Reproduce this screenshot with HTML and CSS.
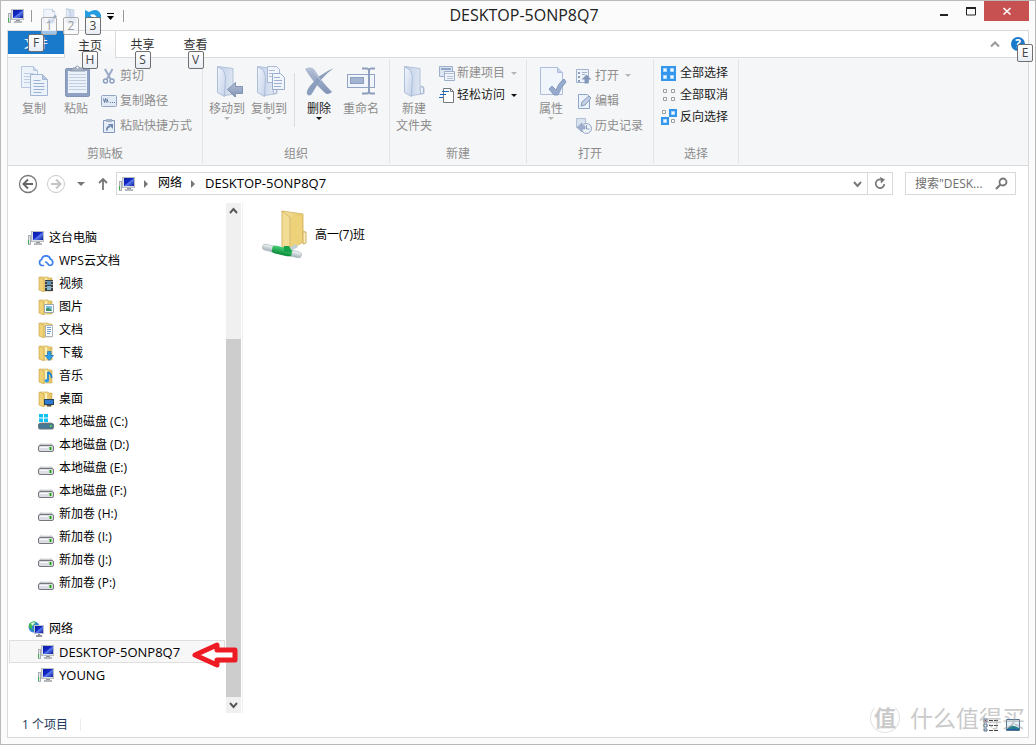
FILE: index.html
```html
<!DOCTYPE html>
<html lang="zh-CN">
<head>
<meta charset="utf-8">
<title>DESKTOP-5ONP8Q7</title>
<link rel="stylesheet" href="styles.css">
</head>
<body>
<svg class="defs" aria-hidden="true">
  <defs>
    <linearGradient id="gScreen" x1="0" y1="0" x2="1" y2="1"><stop offset="0" stop-color="#0a1fa8"/><stop offset=".45" stop-color="#1326c4"/><stop offset=".55" stop-color="#5c7cf0"/><stop offset="1" stop-color="#0b1a9a"/></linearGradient>
    <linearGradient id="gPale" x1="0" y1="0" x2="1" y2="1"><stop offset="0" stop-color="#f1f6fd"/><stop offset="1" stop-color="#c3d1e8"/></linearGradient>
    <linearGradient id="gFront" x1="0" y1="0" x2="1" y2="0"><stop offset="0" stop-color="#c0cfe6"/><stop offset="1" stop-color="#e3ebf6"/></linearGradient>
    <linearGradient id="gSteel" x1="0" y1="0" x2="0" y2="1"><stop offset="0" stop-color="#b3bfd5"/><stop offset="1" stop-color="#8093b6"/></linearGradient>
    <linearGradient id="gYellow" x1="0" y1="0" x2="1" y2="0"><stop offset="0" stop-color="#f7e7a8"/><stop offset="1" stop-color="#e2be5a"/></linearGradient>
    <linearGradient id="gPipe" x1="0" y1="0" x2="0" y2="1"><stop offset="0" stop-color="#f4f7f8"/><stop offset="1" stop-color="#a3b2b8"/></linearGradient>
    <linearGradient id="gGreen" x1="0" y1="0" x2="0" y2="1"><stop offset="0" stop-color="#4fd07a"/><stop offset="1" stop-color="#078a35"/></linearGradient>
  </defs>
  <symbol id="pc" viewBox="0 0 16 16">
    <path d="M0 5h3v10H0z" fill="#a9aeb2"/><path d="M1 6h1v8H1z" fill="#e4e7e9"/><path d="M0 10h1v4H0z" fill="#3fae4a"/>
    <rect x="3" y="1" width="13" height="11" fill="#b9bdc1"/><rect x="4" y="2" width="11" height="9" fill="#dfe2e5"/><rect x="5" y="2" width="10" height="8" fill="url(#gScreen)"/>
    <path d="M8 12h4v2H8z" fill="#8f959a"/><path d="M6 13h8v2H6z" fill="#b4b9bd"/>
  </symbol>
  <symbol id="net" viewBox="0 0 16 16">
    <circle cx="6" cy="6" r="5.500" fill="#2f86d2"/><path d="M1 3q4-4 7-2L6 4 4 5v3L1 7zM5 8l3 1-2 2z" fill="#3fb649"/><path d="M3 2l3-1 1 1-3 3z" fill="#d9f1e8"/>
    <rect x="6" y="4" width="10" height="9" fill="#bfc4cc"/><rect x="7" y="5" width="8" height="7" fill="url(#gScreen)"/><path d="M10 13h2v1h2v2H8v-2h2z" fill="#8f959a"/>
  </symbol>
  <symbol id="cloud" viewBox="0 0 16 16">
    <path d="M5.500 12.500H4.200A3.100 3.100 0 0 1 3.600 6.500 4.600 4.600 0 0 1 12.500 6.300 3.200 3.200 0 0 1 12.200 12.500C9.500 12.500 9.700 9 7.700 9" fill="none" stroke="#3c80ee" stroke-width="1.700" stroke-linecap="round"/>
  </symbol>
  <symbol id="fold" viewBox="0 0 16 16">
    <path d="M2 1h8l1 1h3v13H6z" fill="url(#gYellow)" stroke="#cfad55" stroke-width=".6"/><path d="M1 1l5 2v13l-5-2z" fill="#f0d274" stroke="#c39f45" stroke-width=".6"/><path d="M7 3l2-1v12l-2 1z" fill="#fff2bd"/>
  </symbol>
  <symbol id="f-video" viewBox="0 0 16 16"><use href="#fold"/><path d="M7 4h8v11H7z" fill="#3b4045"/><path d="M9 5h4v4H9z" fill="#5f91b8"/><path d="M9 10h4v4H9z" fill="#86b6cf"/><path d="M7.500 5h1v1h-1zm0 3h1v1h-1zm0 3h1v1h-1zm6-6h1v1h-1zm0 3h1v1h-1zm0 3h1v1h-1z" fill="#fff"/></symbol>
  <symbol id="f-pic" viewBox="0 0 16 16"><use href="#fold"/><path d="M6.500 5.500h9v8h-9z" fill="#fff" stroke="#9aa7b2"/><path d="M8 7h6v3H8z" fill="#80bde8"/><path d="M8 10l2-1.500L14 11v1H8z" fill="#38966a"/></symbol>
  <symbol id="f-doc" viewBox="0 0 16 16"><use href="#fold"/><path d="M7.500 3.500h7v11h-7z" fill="#fff" stroke="#a9b3bd"/><path d="M9 5.500h4M9 7.500h4M9 9.500h4M9 11.500h3" stroke="#6f9bd0"/></symbol>
  <symbol id="f-down" viewBox="0 0 16 16"><use href="#fold"/><path d="M9.500 6.500h3.500v4h2.500L11.200 15.500 7 10.500h2.500z" fill="#2da0ea" stroke="#1573b8" stroke-width=".7"/></symbol>
  <symbol id="f-music" viewBox="0 0 16 16"><use href="#fold"/><path d="M10 4v8.500M10 4q4 2 3.500 6" fill="none" stroke="#1583d8" stroke-width="1.700"/><ellipse cx="8.700" cy="12.700" rx="2.200" ry="1.700" fill="#2c9df0"/></symbol>
  <symbol id="f-desk" viewBox="0 0 16 16"><use href="#fold"/><path d="M6 8h10v6H6z" fill="#27445e"/><path d="M7 9h8v4H7z" fill="#2e7bd0"/><path d="M9 14h4v1.500H9z" fill="#555"/></symbol>
  <symbol id="drive" viewBox="0 0 16 16">
    <path d="M3 6h10l2 2H1z" fill="#c9cccf"/><path d="M4 6h8l1 1H3z" fill="#eceeef"/><rect x=".5" y="8.500" width="15" height="6" rx="1.500" fill="#dcdde4" stroke="#74787d"/><path d="M2 10h8v1H2z" fill="#f8f8fb"/><path d="M11 10h3v3h-3z" fill="#8ad37e"/><path d="M12 10h1v3h-1z" fill="#179b10"/>
  </symbol>
  <symbol id="sysdrive" viewBox="0 0 16 16">
    <path d="M1 0h4v3.500H1zM6 0h4v3.500H6zM1 4.500h4V8H1zM6 4.500h4V8H6z" fill="#0fc1f2"/><path d="M3 8h10l2.500 2.500H.5z" fill="#c6cbd0"/><rect x=".5" y="9.500" width="15" height="5.500" rx="1.500" fill="#477992" stroke="#68747c"/><path d="M12 11h1.500v2H12z" fill="#60e34b"/>
  </symbol>
  <symbol id="copy" viewBox="0 0 32 32">
    <path d="M3.500 1.500h12l4 4v17h-16z" fill="#edf3fb" stroke="#b6c6df"/><path d="M15.500 1.500v4h4" fill="#cfdaeb" stroke="#b6c6df"/><path d="M6 8.500h10M6 11.500h7M6 14.500h7M6 17.500h7" stroke="#c0cee4"/>
    <path d="M12.500 9.500h12l5 5v16h-17z" fill="#edf3fb" stroke="#a2b5d4"/><path d="M24.500 9.500v5h5" fill="#b9c9e1" stroke="#a2b5d4"/><path d="M15.500 15.500h7M15.500 18.500h11M15.500 21.500h11M15.500 24.500h11M15.500 27.500h8" stroke="#9bb0d4"/>
  </symbol>
  <symbol id="paste" viewBox="0 0 32 32">
    <rect x="5.500" y="3.500" width="24" height="28" rx="1.500" fill="#8fa2c3" stroke="#8295b8"/><path d="M8 6h19v22H8z" fill="#ecf2fa"/><path d="M9 9.500h17M9 12.500h17M9 15.500h17M9 18.500h17M9 21.500h17M9 24.500h17" stroke="#c1cee1"/><path d="M10 6l3-3h2q2-4 5 0h2l3 3z" fill="#a7b2c5" stroke="#8b98ae"/><circle cx="17.500" cy="2.500" r="1" fill="#fff"/>
  </symbol>
  <symbol id="cut" viewBox="0 0 16 16"><path d="M4 1l5.500 10M11.500 1L6 11" stroke="#9babc8" stroke-width="2"/><circle cx="4.500" cy="13" r="2" fill="none" stroke="#8b9fc1" stroke-width="1.500"/><circle cx="11" cy="13" r="2" fill="none" stroke="#8b9fc1" stroke-width="1.500"/></symbol>
  <symbol id="path" viewBox="0 0 16 16"><rect x=".5" y="2.500" width="15" height="11" rx="1" fill="#e2eaf5" stroke="#93a4c3"/><path d="M2.500 5.500l1 4 1-4 1 4M6 5.500l1 4M9 9.500h1M11 9.500h1M13 9.500h1" fill="none" stroke="#6379a3"/></symbol>
  <symbol id="shortcut" viewBox="0 0 16 16"><path d="M2.500 2.500h11v12h-11z" fill="#e6edf7" stroke="#8297bb"/><path d="M5 1h6v3H5z" fill="#a3b1c9"/><path d="M6 12.500q-.5-4 3-4" fill="none" stroke="#7087b1" stroke-width="1.800"/><path d="M7 6h5v5z" fill="#7087b1"/></symbol>
  <symbol id="bigfold" viewBox="0 0 32 32"><path d="M7 1.500l15 2v17l4 2v6l-12 2z" fill="url(#gFront)" stroke="#b3c2da"/><path d="M22 22h3.500v6l-3 1z" fill="#e9f0f9" stroke="#a9bad5"/><path d="M6.500 1.500l6 4 2 6-1 20-7-4z" fill="url(#gPale)" stroke="#aebfd9"/></symbol>
  <symbol id="moveto" viewBox="0 0 32 32"><use href="#bigfold"/><path d="M16.500 24.500l8-7v4h7v7h-7v4z" fill="url(#gSteel)" stroke="#8394b3"/></symbol>
  <symbol id="copyto" viewBox="0 0 32 32"><use href="#bigfold" x="-2"/><path d="M14.500 1.500h9l3 3v13h-12z" fill="#f1f5fb" stroke="#a6b8d5"/><path d="M16 5.500h6M16 8.500h3M16 11.500h3" stroke="#aabcd8"/><path d="M19.500 8.500h8l4 4v12h-12z" fill="#f1f5fb" stroke="#98acce"/><path d="M21 12.500h6M21 15.500h8M21 18.500h8M21 21.500h7" stroke="#9bb0d2"/></symbol>
  <symbol id="delete" viewBox="0 0 32 32"><path d="M2 4q7-4 11 3 6 10 16 20-5 4-8 0Q9 16 2 4z" fill="url(#gSteel)"/><path d="M31 3Q18 12 10 27q-3 6-6 2-1-3 3-8Q16 9 31 3z" fill="#8c9ebd"/><path d="M4 5q5-2 8 3l6 8" fill="none" stroke="#bdc8db"/></symbol>
  <symbol id="rename" viewBox="0 0 32 32"><rect x="2.500" y="9.500" width="27" height="13" fill="#f0f5fb" stroke="#91a4c5"/><rect x="5.500" y="12.500" width="13" height="6" fill="#a3b3cf" stroke="#8b9ebf"/><path d="M17 3.500h5q1.500 0 2 2 .5-2 2-2h4M24 5v22M17 28.500h5q1.500 0 2-2 .5 2 2 2h4" fill="none" stroke="#8c9ebc" stroke-width="2"/></symbol>
  <symbol id="props" viewBox="0 0 32 32"><path d="M5.500 2.500h17l5 5v22h-22z" fill="#f0f5fc" stroke="#acbedb"/><path d="M22.500 2.500v5h5" fill="#c4d1e6" stroke="#acbedb"/><path d="M14 24l3-3 4 4q3-8 8-11l2 3q-5 5-8 13h-4z" fill="#96aacd" stroke="#869bc0"/></symbol>
  <symbol id="newitem" viewBox="0 0 16 16"><path d="M.5 1.500h13v10H.5z" fill="#dce5f2" stroke="#9eafcc"/><path d="M2 4h10" stroke="#94a6c5" stroke-width="2"/><path d="M5.500 6.500h10v9h-10z" fill="#f0f5fb" stroke="#9eafcc"/><path d="M6 8.500h9M8 11.500h6M8 13.500h6" stroke="#b2c0d8"/></symbol>
  <symbol id="easy" viewBox="0 0 16 16"><path d="M4.500 1.500h7l3 3v11h-10z" fill="#fff" stroke="#777b80"/><path d="M11.500 1.500v3h3" fill="none" stroke="#777b80"/><path d="M3 4.500h7M1 7.500h6M0 10.500h4" stroke="#1669b8"/></symbol>
  <symbol id="open" viewBox="0 0 16 16"><path d="M.5 1.500h12v13H.5z" fill="#eef3fa" stroke="#a2b3cf"/><path d="M2 4h2v2H2zM2 8h2v2H2zM2 12h2v2H2z" fill="#8a9dbf"/><path d="M6 4.500h5M6 6.500h3" stroke="#a2b3cf"/><path d="M10.500 6.500l5 5h-3v4h-4v-4h-3z" fill="#8397bb"/></symbol>
  <symbol id="edit" viewBox="0 0 16 16"><path d="M2.500 1.500h9l2 2v12h-11z" fill="#edf3fb" stroke="#8ea6cd"/><path d="M5 13l1-4 7-6 2 2-6 7z" fill="#c4d1e6" stroke="#8498bb"/></symbol>
  <symbol id="history" viewBox="0 0 16 16"><path d="M.5.500h9v9h-9z" fill="#d9e2ef" stroke="#b1bed3"/><circle cx="10.500" cy="10.500" r="5" fill="#edf2f8" stroke="#91a4c5"/><path d="M10.500 7v4h3" fill="none" stroke="#8c9fbe"/><path d="M1 9.500L6 5v3h3v3H6v3z" fill="#a0b0cc" stroke="#8c9fbe" stroke-width=".7"/></symbol>
  <symbol id="selall" viewBox="0 0 16 16"><path d="M0 1h15v15H0z" fill="#3497ed"/><path d="M2.500 3.500h3v3h-3zM9.500 3.500h3v3h-3zM2.500 10.500h3v3h-3zM9.500 10.500h3v3h-3z" fill="#f4faff" stroke="#b3dafb"/></symbol>
  <symbol id="selnone" viewBox="0 0 16 16"><path d="M2.500 2.500h3v3h-3zM10.500 2.500h3v3h-3zM2.500 10.500h3v3h-3zM10.500 10.500h3v3h-3z" fill="#fff" stroke="#9c9c9c"/></symbol>
  <symbol id="selinv" viewBox="0 0 16 16"><path d="M1.500 1.500h3v3h-3zM10.500 10.500h3v3h-3z" fill="#fff" stroke="#9c9c9c"/><path d="M8 0h8v8H8zM0 8h8v8H0z" fill="#3497ed"/><path d="M10.500 2.500h3v3h-3zM2.500 10.500h3v3h-3z" fill="#f4faff" stroke="#b3dafb"/></symbol>
  <symbol id="undo" viewBox="0 0 16 16"><path d="M0 2v8h8L5 7q4-2 6 1 2 3-1 7 7-3 6-8Q13-1 4 4z" fill="#249cdf"/></symbol>
  <symbol id="netfolder" viewBox="0 0 46 50">
    <path d="M20 1l21 3v17l2 1v9L27 40z" fill="url(#gYellow)" stroke="#d9bd6d"/><path d="M28 8l12-3v27l-11 8z" fill="#eed27a"/><path d="M41 22h3v11l-3 1z" fill="#f9edc0" stroke="#cfb060"/><path d="M20 1l8 6v35l-8-6z" fill="#f3dc95" stroke="#d5b866"/>
    <path d="M25 39l9-5 2 3-9 5z" fill="#c2cfd2"/><g transform="rotate(13 20 41)"><rect x="0" y="38" width="40" height="6" rx="3" fill="url(#gPipe)" stroke="#a6b3b8" stroke-width=".6"/><path d="M10 38l4-1h13l3 1v6l-4 1H13l-3-1z" fill="url(#gGreen)"/></g><path d="M22 36h5l3 6h-8z" fill="#18a14b"/>
  </symbol>
</svg>

<div class="window">
  <header class="titlebar">
    <div class="quick">
      <svg class="i16"><use href="#pc"/></svg><i class="bar"></i>
      <button class="qbtn" aria-label="属性"><svg class="i16"><use href="#props"/></svg><kbd class="tip faded">1</kbd></button>
      <button class="qbtn" aria-label="新建文件夹"><svg class="i16"><use href="#bigfold"/></svg><kbd class="tip faded">2</kbd></button>
      <button class="qbtn" aria-label="撤消"><svg class="i16"><use href="#undo"/></svg><kbd class="tip">3</kbd></button>
      <button class="qmore" aria-label="自定义"><svg width="7" height="8" viewBox="0 0 7 8"><path d="M0 1h7v1H0zM0 4h7L3.500 8z"/></svg></button><i class="bar"></i>
    </div>
    <h1 class="title">DESKTOP-5ONP8Q7</h1>
    <div class="controls">
      <button aria-label="最小化"><svg width="10" height="12" viewBox="0 0 10 12"><path d="M1 9h8v2H1z" fill="#222"/></svg></button>
      <button aria-label="最大化"><svg width="12" height="12" viewBox="0 0 12 12"><path d="M1.500 3h9v7h-9z" fill="none" stroke="#222"/><path d="M1 2h10v2H1z" fill="#222"/></svg></button>
      <button class="close" aria-label="关闭"><svg width="10" height="10" viewBox="0 0 10 10"><path d="M1.500 2l7 6.500M8.500 2l-7 6.500" stroke="#fff" stroke-width="1.600"/></svg></button>
    </div>
  </header>

  <div class="client">
    <nav class="tabs">
      <button class="tab file">文件<kbd class="tip">F</kbd></button>
      <button class="tab active">主页<kbd class="tip">H</kbd></button>
      <button class="tab">共享<kbd class="tip">S</kbd></button>
      <button class="tab">查看<kbd class="tip">V</kbd></button>
      <div class="tabend">
        <button aria-label="折叠功能区"><svg width="10" height="8" viewBox="0 0 10 8"><path d="M1 6.500l4-4 4 4" fill="none" stroke="#999" stroke-width="2"/></svg></button>
        <button class="help" aria-label="帮助"><span>?</span><kbd class="tip">E</kbd></button>
      </div>
    </nav>

    <div class="ribbon">
      <section class="group clipboard">
        <div class="tools">
          <button class="big"><svg class="i32"><use href="#copy"/></svg><span>复制</span></button>
          <button class="big"><svg class="i32"><use href="#paste"/></svg><span>粘贴</span></button>
          <div class="stack">
            <button class="small"><svg class="i16"><use href="#cut"/></svg>剪切</button>
            <button class="small"><svg class="i16"><use href="#path"/></svg>复制路径</button>
            <button class="small"><svg class="i16"><use href="#shortcut"/></svg>粘贴快捷方式</button>
          </div>
        </div>
        <h2>剪贴板</h2>
      </section>
      <section class="group">
        <div class="tools">
          <button class="big"><svg class="i32"><use href="#moveto"/></svg><span>移动到</span><i class="caret"></i></button>
          <button class="big"><svg class="i32"><use href="#copyto"/></svg><span>复制到</span><i class="caret"></i></button>
          <i class="split"></i>
          <button class="big on"><svg class="i32"><use href="#delete"/></svg><span>删除</span><i class="caret"></i></button>
          <button class="big"><svg class="i32"><use href="#rename"/></svg><span>重命名</span></button>
        </div>
        <h2>组织</h2>
      </section>
      <section class="group create">
        <div class="tools">
          <button class="big"><svg class="i32"><use href="#bigfold"/></svg><span>新建<br>文件夹</span></button>
          <div class="stack tight">
            <button class="small"><svg class="i16"><use href="#newitem"/></svg>新建项目<i class="caret"></i></button>
            <button class="small on"><svg class="i16"><use href="#easy"/></svg>轻松访问<i class="caret"></i></button>
          </div>
        </div>
        <h2>新建</h2>
      </section>
      <section class="group opening">
        <div class="tools">
          <button class="big"><svg class="i32"><use href="#props"/></svg><span>属性</span><i class="caret"></i></button>
          <div class="stack">
            <button class="small"><svg class="i16"><use href="#open"/></svg>打开<i class="caret"></i></button>
            <button class="small"><svg class="i16"><use href="#edit"/></svg>编辑</button>
            <button class="small"><svg class="i16"><use href="#history"/></svg>历史记录</button>
          </div>
        </div>
        <h2>打开</h2>
      </section>
      <section class="group select">
        <div class="tools">
          <div class="stack tight">
            <button class="small on"><svg class="i16"><use href="#selall"/></svg>全部选择</button>
            <button class="small on"><svg class="i16"><use href="#selnone"/></svg>全部取消</button>
            <button class="small on"><svg class="i16"><use href="#selinv"/></svg>反向选择</button>
          </div>
        </div>
        <h2>选择</h2>
      </section>
    </div>

    <div class="navrow">
      <button aria-label="后退"><svg width="20" height="20" viewBox="0 0 20 20"><circle cx="10" cy="10" r="8.500" fill="#fff" stroke="#777" stroke-width="1.300"/><path d="M15 10H6M10 5.500L5.500 10l4.500 4.500" fill="none" stroke="#666" stroke-width="2"/></svg></button>
      <button aria-label="前进"><svg width="20" height="20" viewBox="0 0 20 20"><circle cx="10" cy="10" r="8.500" fill="#fff" stroke="#c9c9c9"/><path d="M5 10h9M10 5.500l4.500 4.500-4.500 4.500" fill="none" stroke="#c4c4c4" stroke-width="2"/></svg></button>
      <button class="recent" aria-label="最近位置"><i class="caret"></i></button>
      <button aria-label="上移"><svg width="10" height="14" viewBox="0 0 10 14"><path d="M5 13V2M1 6l4-4 4 4" fill="none" stroke="#777" stroke-width="1.800"/></svg></button>
      <div class="address">
        <svg class="i16"><use href="#pc"/></svg>
        <svg class="chev" viewBox="0 0 4 8"><path d="M0 0l4 4-4 4z"/></svg>
        <a href="#">网络</a>
        <svg class="chev" viewBox="0 0 4 8"><path d="M0 0l4 4-4 4z"/></svg>
        <a class="host" href="#">DESKTOP-5ONP8Q7</a>
        <button class="drop" aria-label="历史地址"><svg width="9" height="8" viewBox="0 0 9 8"><path d="M1 2l3.500 4L8 2" fill="none" stroke="#777" stroke-width="1.900"/></svg></button>
        <button class="refresh" aria-label="刷新"><svg width="12" height="13" viewBox="0 0 12 13"><path d="M6.500 2.500A4.300 4.300 0 1 0 10.300 7" fill="none" stroke="#777" stroke-width="1.700"/><path d="M6 0l5 2.500-4 4z" fill="#777"/></svg></button>
      </div>
      <label class="search"><input type="text" aria-label="搜索" placeholder='搜索"DESK...'><svg width="13" height="13" viewBox="0 0 13 13"><circle cx="8" cy="5" r="3.500" fill="none" stroke="#777" stroke-width="1.800"/><path d="M5.500 7.500L1 12" stroke="#777" stroke-width="2.200"/></svg></label>
    </div>

    <div class="main">
      <nav class="tree">
        <a class="node" href="#"><svg class="i16"><use href="#pc"/></svg>这台电脑</a>
        <a class="node sub" href="#"><svg class="i16"><use href="#cloud"/></svg>WPS云文档</a>
        <a class="node sub" href="#"><svg class="i16"><use href="#f-video"/></svg>视频</a>
        <a class="node sub" href="#"><svg class="i16"><use href="#f-pic"/></svg>图片</a>
        <a class="node sub" href="#"><svg class="i16"><use href="#f-doc"/></svg>文档</a>
        <a class="node sub" href="#"><svg class="i16"><use href="#f-down"/></svg>下载</a>
        <a class="node sub" href="#"><svg class="i16"><use href="#f-music"/></svg>音乐</a>
        <a class="node sub" href="#"><svg class="i16"><use href="#f-desk"/></svg>桌面</a>
        <a class="node sub" href="#"><svg class="i16"><use href="#sysdrive"/></svg>本地磁盘 (C:)</a>
        <a class="node sub" href="#"><svg class="i16"><use href="#drive"/></svg>本地磁盘 (D:)</a>
        <a class="node sub" href="#"><svg class="i16"><use href="#drive"/></svg>本地磁盘 (E:)</a>
        <a class="node sub" href="#"><svg class="i16"><use href="#drive"/></svg>本地磁盘 (F:)</a>
        <a class="node sub" href="#"><svg class="i16"><use href="#drive"/></svg>新加卷 (H:)</a>
        <a class="node sub" href="#"><svg class="i16"><use href="#drive"/></svg>新加卷 (I:)</a>
        <a class="node sub" href="#"><svg class="i16"><use href="#drive"/></svg>新加卷 (J:)</a>
        <a class="node sub" href="#"><svg class="i16"><use href="#drive"/></svg>新加卷 (P:)</a>
        <a class="node section" href="#"><svg class="i16"><use href="#net"/></svg>网络</a>
        <a class="node sub host selected" href="#"><svg class="i16"><use href="#pc"/></svg>DESKTOP-5ONP8Q7
          <svg class="pointer" width="50" height="30" viewBox="0 0 50 30"><path d="M5 15L27 5v5h18v10H27v5z" fill="#fff" stroke="#ed1c24" stroke-width="5" stroke-linejoin="round"/></svg></a>
        <a class="node sub host" href="#"><svg class="i16"><use href="#pc"/></svg>YOUNG</a>
      </nav>
      <div class="scroll">
        <button aria-label="向上滚动"><svg width="9" height="8" viewBox="0 0 9 8"><path d="M1 6l3.500-4L8 6" fill="none" stroke="#555" stroke-width="1.900"/></svg></button>
        <div class="track"><div class="thumb"></div></div>
        <button aria-label="向下滚动"><svg width="9" height="8" viewBox="0 0 9 8"><path d="M1 2l3.500 4L8 2" fill="none" stroke="#555" stroke-width="1.900"/></svg></button>
      </div>
      <main class="files">
        <a class="item" href="#"><svg width="46" height="50"><use href="#netfolder"/></svg>高一(7)班</a>
      </main>
    </div>

    <footer class="status">
      <span class="count">1 个项目</span>
      <div class="views">
        <button aria-label="详细信息"><svg width="16" height="14" viewBox="0 0 16 14"><path d="M1 1h3v3H1zM1 6h3v3H1zM1 11h3v2H1z" fill="#fff" stroke="#4a6a8a"/><path d="M6 2.500h4M11 2.500h4M6 7.500h4M11 7.500h4M6 12.500h4M11 12.500h4" stroke="#444"/><path d="M2 2h1v1H2z" fill="#d33"/></svg></button>
        <button aria-label="大图标"><svg width="16" height="14" viewBox="0 0 16 14"><path d="M1.500 1.500h13v11h-13z" fill="#e6f2fb" stroke="#54738f"/><path d="M2 11q4-6 12-1v2H2z" fill="#237d8c"/><path d="M2 11h12v1H2z" fill="#1d5fa6"/></svg></button>
      </div>
      <div class="watermark"><span class="seal">值</span><span>什么值得买</span></div>
    </footer>
  </div>
</div>
</body>
</html>
```
FILE: styles.css
```css
* { box-sizing: border-box; }
body { margin: 0; color: #000; font: 12px/16px "Open Sans", "Noto Sans CJK SC", sans-serif; }
button { display: flex; align-items: center; justify-content: center; margin: 0; padding: 0; border: 0; background: none; color: inherit; font: inherit; }
a { color: inherit; text-decoration: none; }
h1, h2 { margin: 0; font-weight: 400; }
svg { display: block; flex: none; }
.defs { position: absolute; width: 0; height: 0; }
.i16 { width: 16px; height: 16px; }
.i32 { width: 32px; height: 32px; }
.host { font-size: 13px; }

.window { display: flex; flex-direction: column; min-height: 100vh; padding: 0 6px 6px; border: 1px solid #b9b9b9; background: #fbfbfb; }
.titlebar { display: grid; grid-template-columns: 1fr auto 1fr; height: 29px; }
.quick { display: flex; align-items: center; gap: 6px; padding-left: 1px; }
.bar { width: 1px; height: 12px; margin: 0 3px 0 1px; background: #999; }
.qmore { margin-right: 2px; }
.qbtn { position: relative; }
.title { align-self: center; padding: 0 0 2px 12px; font-size: 16px; line-height: 20px; color: #222; }
.controls { display: flex; justify-content: flex-end; align-items: flex-start; }
.controls button { width: 27px; height: 20px; }
.controls .close { width: 45px; background: #c75050; }

.tip { position: absolute; z-index: 2; left: 50%; top: 20px; width: 16px; height: 18px; margin-left: -8px; border: 1px solid #707070; border-radius: 2px; background: linear-gradient(#fff, #e8edf5); color: #444; font: 12px/16px "Open Sans", sans-serif; text-align: center; }
.qbtn .tip { top: 9px; }
.faded { border-color: #aaa; background: rgba(246, 248, 251, .6); color: #999; }

.client { display: flex; flex: 1; flex-direction: column; border: 1px solid #d9d9d9; background: #fff; }
.tabs { display: flex; height: 27px; border-bottom: 1px solid #dadbdc; }
.tab { position: relative; width: 53px; height: 26px; padding-top: 2px; color: #333; }
.tab.file { width: 56px; height: 23px; background: #1979ca; color: #fff; }
.tab.file .tip { top: 3px; }
.tab.active { width: 52px; height: 27px; border: 1px solid #dadbdc; border-width: 0 1px; background: linear-gradient(#fff, #f5f6f7); }
.tabend { display: flex; align-items: center; gap: 11px; margin-left: auto; padding-right: 3px; }
.help { position: relative; width: 14px; height: 14px; border-radius: 50%; background: #1979ca; color: #fff; font-weight: 700; }
.help .tip { left: 14px; top: 7px; }

.ribbon { display: flex; height: 108px; border-bottom: 1px solid #dadbdc; background: #f5f6f7; }
.group { display: flex; flex-direction: column; margin: 2px 0; padding: 1px 0; border-right: 1px solid #e2e3e4; }
.tools { display: flex; flex: 1; align-items: flex-start; padding: 0 7px 0 3px; color: #8d8d8d; }
.clipboard .tools { padding: 0 10px 0 5px; }
.create .tools { padding-right: 9px; }
.opening .tools { padding-right: 10px; }
.select .tools { padding: 0 10px 0 3px; }
.group h2 { color: #8d8d8d; font-size: 12px; line-height: 16px; text-align: center; }
.big { flex-direction: column; width: 42px; padding-top: 4px; white-space: nowrap; }
.big span { margin-top: 3px; line-height: 17px; }
.caret { width: 0; height: 0; border: 3px solid transparent; border-top-color: #b5b5b5; border-bottom: 0; }
.on { color: #222; }
.on .caret { border-top-color: #111; }
.stack { display: flex; flex-direction: column; padding: 2px 0 0 4px; }
.small { justify-content: flex-start; gap: 3px; height: 25px; white-space: nowrap; }
.small .caret { margin-left: 3px; }
.tight { padding-top: 1px; }
.tight .small { height: 22px; gap: 2px; }
.tight .caret { margin-left: 4px; }
.select .small { gap: 3px; }
.split { width: 1px; height: 54px; margin: 12px 3px 0 4px; background: #dcdddf; }

.navrow { display: flex; align-items: center; height: 37px; padding: 0 12px 2px 10px; }
.navrow > button { margin-right: 8px; }
.navrow .recent { width: 14px; margin-right: 10px; }
.recent .caret { border-width: 4px 4px 0; border-top-color: #777; }
.address { display: flex; flex: 1; align-items: center; height: 23px; padding-left: 2px; border: 1px solid #d9d9d9; }
.address a { padding-bottom: 2px; }
.chev { width: 4px; height: 8px; margin: 0 10px 0 9px; fill: #777; }
.drop { width: 20px; height: 21px; margin-left: auto; }
.refresh { width: 25px; height: 21px; border-left: 1px solid #d9d9d9; }
.search { display: flex; align-items: center; width: 111px; height: 23px; margin-left: 12px; padding: 0 7px 0 9px; border: 1px solid #d9d9d9; }
.search input { flex: 1; width: 0; padding: 0; border: 0; outline: 0; background: none; font: inherit; }
.search input::placeholder { color: #6d6d6d; opacity: 1; }

.main { display: flex; flex: 1; }
.tree { width: 218px; padding: 23px 1px 0; }
.node { display: flex; align-items: center; gap: 5px; height: 23px; padding-left: 19px; white-space: nowrap; }
.node.sub { padding-left: 29px; }
.node.section { margin-top: 23px; }
.node.selected { position: relative; padding-left: 28px; border: 1px solid #dedede; background: #f7f7f7; }
.pointer { position: absolute; z-index: 2; right: -16px; top: -1px; }
.scroll { display: flex; flex-direction: column; width: 15px; background: #f0f0f0; }
.scroll button { height: 16px; }
.track { display: flex; flex: 1; flex-direction: column; justify-content: flex-end; }
.thumb { height: 75%; background: #cdcdcd; }
.files { flex: 1; margin-left: 1px; padding: 7px 19px; border-left: 1px solid #f0f0f0; }
.item { display: inline-flex; align-items: center; gap: 7px; }

.status { position: relative; display: flex; align-items: center; justify-content: space-between; height: 24px; padding: 0 7px 0 14px; color: #1e395b; }
.count { padding-right: 12px; border-right: 1px solid #ececec; line-height: 12px; }
.views { display: flex; gap: 6px; }
.watermark { position: absolute; right: 3px; bottom: 4px; display: flex; align-items: center; gap: 10px; color: #a0a0a0; font-size: 23px; line-height: 30px; opacity: .55; white-space: nowrap; }
.seal { width: 30px; height: 30px; border: 1px solid #c8c8c8; border-top-color: transparent; border-radius: 50%; font-size: 22px; font-weight: 700; line-height: 27px; text-align: center; }
```
